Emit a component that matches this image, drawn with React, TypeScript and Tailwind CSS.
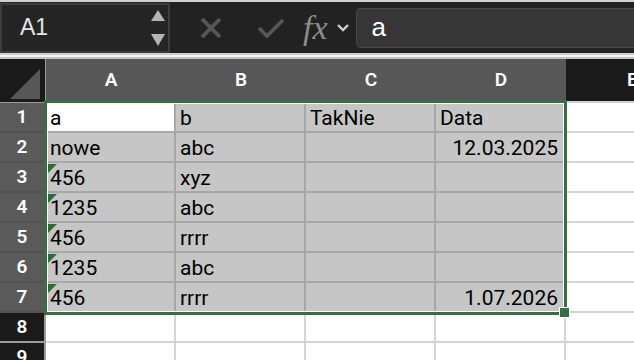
import React from "react";

const cellFont = { fontFamily: "Roboto, 'Open Sans', sans-serif" };

const columns = ["A", "B", "C", "D"];

type Row = { cells: string[]; textNum?: boolean };

const rows: Row[] = [
  { cells: ["a", "b", "TakNie", "Data"] },
  { cells: ["nowe", "abc", "", "12.03.2025"] },
  { cells: ["456", "xyz", "", ""], textNum: true },
  { cells: ["1235", "abc", "", ""], textNum: true },
  { cells: ["456", "rrrr", "", ""], textNum: true },
  { cells: ["1235", "abc", "", ""], textNum: true },
  { cells: ["456", "rrrr", "", "1.07.2026"], textNum: true },
];

function Toolbar() {
  return (
    <div className="flex h-[53px] shrink-0 items-center border-t-2 border-[#d3d0c8] bg-[#222222]">
      {/* name box */}
      <div className="flex h-[50px] w-[170px] items-center justify-between border-2 border-[#3d3d3d] bg-[#252525] pl-[18px] pr-[2px]">
        <span
          className="text-[23px] text-[#e6e6e6]"
          style={{ fontFamily: "'Liberation Sans', Arial, sans-serif" }}
        >
          A1
        </span>
        <svg width="16" height="38" viewBox="0 0 16 38">
          <polygon points="8,1 15,12 1,12" fill="#b5b5b5" />
          <polygon points="1,25 15,25 8,37" fill="#b5b5b5" />
        </svg>
      </div>
      {/* cancel */}
      <svg className="ml-[29px]" width="24" height="20" viewBox="0 0 24 20">
        <path d="M3 1 L21 19 M21 1 L3 19" stroke="#575757" strokeWidth="3.8" />
      </svg>
      {/* enter */}
      <svg className="ml-[34px]" width="28" height="20" viewBox="0 0 28 20">
        <path d="M2 10 L10 18 L26 2" stroke="#575757" strokeWidth="3.8" fill="none" />
      </svg>
      <span
        className="ml-[18px] text-[34px] italic leading-none text-[#8c8c8c]"
        style={{ fontFamily: "'Liberation Serif', 'Times New Roman', serif" }}
      >
        fx
      </span>
      <svg className="ml-[8px]" width="14" height="10" viewBox="0 0 14 10">
        <path d="M2 2 L7 7 L12 2" stroke="#cfcfcf" strokeWidth="2.4" fill="none" />
      </svg>
      <div className="ml-[6px] flex h-[40px] flex-1 items-center rounded-l-[5px] border border-r-0 border-[#474747] bg-[#363636] pl-[15px]">
        <span
          className="text-[26px] text-white"
          style={{ fontFamily: "'Liberation Sans', Arial, sans-serif" }}
        >
          a
        </span>
      </div>
    </div>
  );
}

function Grid() {
  return (
    <div className="relative shrink-0" style={cellFont}>
      {/* header row */}
      <div className="flex h-[44px]">
        <div className="relative h-[44px] w-[46px] shrink-0 border-r border-b border-[#9c9c9c] bg-[#1a1a1a]">
          <svg className="absolute left-[9px] top-[9px]" width="32" height="32" viewBox="0 0 32 32">
            <polygon points="31,1 31,31 1,31" fill="#575757" />
          </svg>
        </div>
        {columns.map((c) => (
          <div
            key={c}
            className="flex h-[44px] w-[130px] shrink-0 items-center justify-center border-b-[3px] border-[#3a6d46] bg-[#575757] pt-[2px] text-[19px] font-semibold text-white"
          >
            {c}
          </div>
        ))}
        <div className="flex h-[44px] flex-1 items-center border-b-2 border-[#d0d0d0] bg-[#1a1a1a] pl-[61px] text-[19px] font-semibold text-white">
          E
        </div>
      </div>

      {/* data rows */}
      {rows.map((r, ri) => (
        <div key={ri} className="flex h-[30px]">
          <div className="flex h-[30px] w-[46px] shrink-0 items-center justify-center border-r-2 border-b-2 border-r-[#3a6d46] border-b-[#525252] bg-[#5a5a5a] text-[19px] font-semibold text-white">
            {ri + 1}
          </div>
          {r.cells.map((v, ci) => {
            const active = ri === 0 && ci === 0;
            const right = ci === 3 && ri > 0;
            return (
              <div
                key={ci}
                className={`relative flex h-[30px] w-[130px] shrink-0 items-end border-r-2 border-b-2 border-[#a7a7a7] px-[4px] pb-[2px] text-[21px] leading-none text-black ${
                  active ? "bg-white" : "bg-[#c6c6c6]"
                } ${right ? "justify-end pr-[6px]" : ""}`}
              >
                {r.textNum && ci === 0 && (
                  <span className="absolute left-[1px] top-[1px] h-0 w-0 border-t-[10px] border-r-[10px] border-t-[#2e6b39] border-r-transparent" />
                )}
                {v}
              </div>
            );
          })}
          <div className="h-[30px] flex-1 border-b-2 border-[#d4d4d4] bg-white" />
        </div>
      ))}

      {[8, 9].map((n) => (
        <div key={n} className="flex h-[30px]">
          <div className="flex h-[30px] w-[46px] shrink-0 items-center justify-center border-r-2 border-b-2 border-[#9c9c9c] bg-[#1a1a1a] text-[19px] font-semibold text-white">
            {n}
          </div>
          {columns.map((c) => (
            <div key={c} className="h-[30px] w-[130px] shrink-0 border-r-2 border-b-2 border-[#d4d4d4] bg-white" />
          ))}
          <div className="h-[30px] flex-1 border-b-2 border-[#d4d4d4] bg-white" />
        </div>
      ))}

      {/* selection outline */}
      <div className="pointer-events-none absolute left-[44px] top-[41px] h-[215px] w-[523px] border-[3px] border-[#3a6d46] shadow-[inset_0_0_0_1px_#ffffff]" />
      <div className="absolute left-[559px] top-[248px] h-[11px] w-[11px] border border-white bg-[#3a6d46]" />
    </div>
  );
}

export default function App() {
  return (
    <div className="flex h-[360px] w-[634px] flex-col overflow-hidden bg-white">
      <Toolbar />
      <div className="h-[2px] shrink-0 bg-[#cfcfcf]" />
      <div className="h-[2px] shrink-0 bg-[#f3f3f3]" />
      <div className="h-[2px] shrink-0 bg-[#c2c2c2]" />
      <Grid />
    </div>
  );
}
